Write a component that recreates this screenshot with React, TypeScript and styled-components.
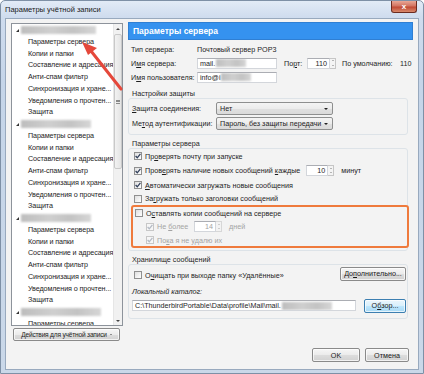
import styled, { createGlobalStyle } from "styled-components";

const GlobalStyle = createGlobalStyle`
  html, body { margin: 0; padding: 0; }
  body {
    width: 424px;
    height: 374px;
    overflow: hidden;
    background: #ffffff;
    font-family: "Liberation Sans", Arial, sans-serif;
    font-size: 7.2px;
    color: #1e1e1e;
  }
  * { box-sizing: border-box; }
`;

const Window = styled.div`
  position: relative;
  width: 424px;
  height: 374px;
  display: flex;
  flex-direction: column;
  background: linear-gradient(180deg, #e2ebf6 0px, #cfdcee 16px, #c5d5e9 80px, #cad8e9 100%);
  border: 1px solid #7e90a6;
  border-radius: 5px 5px 0 0;
  padding: 0 4px 3px 4px;
`;

const TitleBar = styled.div`
  height: 17px;
  display: flex;
  align-items: center;
  justify-content: space-between;
`;

const Title = styled.span`
  font-size: 7.5px;
  color: #1a1a1a;
`;

const CloseBtn = styled.div`
  align-self: flex-start;
  width: 26px;
  height: 12px;
  margin-right: 2px;
  border: 1px solid #6b2b20;
  border-top: none;
  border-radius: 0 0 3px 3px;
  background: linear-gradient(180deg, #e9a795 0%, #d27461 45%, #c14a35 55%, #d88a6c 100%);
  color: #ffffff;
  font-size: 8px;
  font-weight: bold;
  display: flex;
  align-items: center;
  justify-content: center;
`;

const Client = styled.div`
  flex: 1;
  display: flex;
  flex-direction: column;
  background: #f3f3f3;
  border: 1px solid #98a9be;
  padding: 3px 5px 6px 5px;
`;

const Main = styled.div`
  flex: 1;
  display: flex;
  gap: 5px;
`;

const LeftCol = styled.div`
  width: 112px;
  display: flex;
  flex-direction: column;
`;

const Tree = styled.div`
  margin-top: 1px;
  height: 303px;
  background: #ffffff;
  border: 1px solid #8d939b;
  display: flex;
  overflow: hidden;
`;

const TreeList = styled.div`
  flex: 1;
  overflow: hidden;
`;

const TreeRow = styled.div<{ $indent: number }>`
  height: 11.76px;
  line-height: 11.76px;
  padding-left: ${(p) => p.$indent}px;
  white-space: nowrap;
  overflow: hidden;
  letter-spacing: -0.1px;
  display: flex;
  align-items: center;
  gap: 2px;
`;

const Expander = styled.span`
  width: 0;
  height: 0;
  border-left: 3px solid transparent;
  border-bottom: 3px solid #333;
  margin-top: 2px;
`;

const Blur = styled.span<{ $w: number }>`
  width: ${(p) => p.$w}px;
  height: 8px;
  background: linear-gradient(90deg, #bdbdbd, #cfcfcf 40%, #c3c3c3 70%, #d6d6d6);
  filter: blur(1.2px);
`;

const ScrollBar = styled.div`
  width: 9px;
  background: #f1f1f1;
  border-left: 1px solid #e6e6e6;
  display: flex;
  flex-direction: column;
  align-items: center;
`;

const ScrollArrow = styled.span`
  height: 9px;
  display: flex;
  align-items: center;
  justify-content: center;
`;

const Thumb = styled.div`
  margin-top: 1px;
  width: 8px;
  height: 135px;
  border: 1px solid #c9c9c9;
  border-radius: 2px;
  background: linear-gradient(90deg, #f2f2f2, #e4e4e4);
  display: flex;
  align-items: center;
  justify-content: center;
`;

const Grip = styled.span`
  width: 4px;
  height: 4px;
  border-top: 1px solid #8a8a8a;
  border-bottom: 1px solid #8a8a8a;
  position: relative;
  &::after {
    content: "";
    position: absolute;
    left: 0;
    right: 0;
    top: 0.5px;
    border-top: 1px solid #8a8a8a;
  }
`;

const Track = styled.div`
  flex: 1;
`;

const Button = styled.div<{ $w: number; $focus?: boolean }>`
  width: ${(p) => p.$w}px;
  height: 14px;
  border: 1px solid ${(p) => (p.$focus ? "#3c7fb1" : "#8a8a8a")};
  border-radius: 2px;
  background: ${(p) =>
    p.$focus
      ? "linear-gradient(180deg, #eaf6fd 0%, #d9f0fc 50%, #bee6fd 51%, #a7d9f5 100%)"
      : "linear-gradient(180deg, #f6f6f6 0%, #ebebeb 50%, #dddddd 51%, #d1d1d1 100%)"};
  box-shadow: inset 0 0 0 1px rgba(255, 255, 255, 0.7);
  display: flex;
  align-items: center;
  justify-content: center;
  white-space: nowrap;
  color: #1a1a1a;
`;

const ActionButton = styled(Button)`
  margin: 2px 0 0 2px;
  height: 13px;
  gap: 3px;
  padding: 0;
  font-size: 6.6px;
  letter-spacing: -0.2px;
  overflow: hidden;
`;

const RightCol = styled.div`
  flex: 1;
  display: flex;
  flex-direction: column;
`;

const Header = styled.div`
  height: 18px;
  background: #3592ef;
  border: 1px solid #2f7fd3;
  color: #ffffff;
  font-weight: bold;
  font-size: 8.5px;
  display: flex;
  align-items: center;
  padding-left: 4px;
`;

const Spacer = styled.div<{ $h: number }>`
  height: ${(p) => p.$h}px;
`;

const FormRow = styled.div<{ $h: number; $mt?: number; $gap?: number }>`
  height: ${(p) => p.$h}px;
  margin-top: ${(p) => p.$mt ?? 0}px;
  gap: ${(p) => p.$gap ?? 0}px;
  display: flex;
  align-items: center;
  padding-left: 3px;
  white-space: nowrap;
`;

const Label = styled.span<{ $w?: number; $ml?: number; $dis?: boolean }>`
  ${(p) => (p.$w ? `width: ${p.$w}px; flex: none;` : "")}
  margin-left: ${(p) => p.$ml ?? 0}px;
  color: ${(p) => (p.$dis ? "#a3a3a3" : "#1e1e1e")};
  white-space: nowrap;
`;

const Field = styled.div<{ $w: number; $align?: string }>`
  width: ${(p) => p.$w}px;
  height: 11px;
  background: #ffffff;
  border: 1px solid #d3d6db;
  border-top-color: #abadb3;
  display: flex;
  align-items: center;
  justify-content: ${(p) => p.$align ?? "flex-start"};
  padding: 0 2px;
  overflow: hidden;
  white-space: nowrap;
  gap: 1px;
`;

const SpinWrap = styled.div<{ $ml: number }>`
  margin-left: ${(p) => p.$ml}px;
  display: flex;
  align-items: center;
`;

const SpinArrows = styled.div<{ $dis?: boolean }>`
  width: 6px;
  height: 11px;
  border: 1px solid #c6c6c6;
  border-left: none;
  background: #f4f4f4;
  display: flex;
  flex-direction: column;
  align-items: center;
  justify-content: space-around;
  opacity: ${(p) => (p.$dis ? 0.6 : 1)};
`;

const Tri = styled.span<{ $up?: boolean; $c?: string; $s?: number }>`
  flex: none;
  width: 0;
  height: 0;
  border-left: ${(p) => p.$s ?? 2}px solid transparent;
  border-right: ${(p) => p.$s ?? 2}px solid transparent;
  ${(p) =>
    p.$up
      ? `border-bottom: ${p.$s ?? 2}px solid ${p.$c ?? "#555"};`
      : `border-top: ${p.$s ?? 2}px solid ${p.$c ?? "#555"};`}
`;

const Select = styled.div`
  width: 117px;
  height: 13px;
  border: 1px solid #8e8f8f;
  border-radius: 2px;
  background: linear-gradient(180deg, #f4f4f4 0%, #ececec 50%, #e0e0e0 51%, #dadada 100%);
  display: flex;
  align-items: center;
  justify-content: space-between;
  padding: 0 4px 0 3px;
  white-space: nowrap;
`;

const GroupCaption = styled.div<{ $mt: number }>`
  height: 10px;
  margin-top: ${(p) => p.$mt}px;
  padding-left: 4px;
  display: flex;
  align-items: center;
`;

const GroupBox = styled.div<{ $pt: number; $pb: number }>`
  width: 280px;
  border: 1px solid #dde3e8;
  border-radius: 3px;
  padding: ${(p) => p.$pt}px 1px ${(p) => p.$pb}px 0;
`;

const CheckRow = styled.div<{ $h: number; $pl: number; $mt?: number }>`
  height: ${(p) => p.$h}px;
  margin-top: ${(p) => p.$mt ?? 0}px;
  display: flex;
  align-items: center;
  padding-left: ${(p) => p.$pl}px;
  white-space: nowrap;
`;

const SplitRow = styled(CheckRow)`
  justify-content: space-between;
`;

const CheckLabel = styled.span`
  display: flex;
  align-items: center;
  margin-top: 3px;
`;

const Text = styled.span<{ $dis?: boolean }>`
  white-space: nowrap;
  color: ${(p) => (p.$dis ? "#a3a3a3" : "#1e1e1e")};
`;

const CheckBox = styled.span<{ $dis?: boolean }>`
  flex: none;
  width: 8px;
  height: 8px;
  margin-right: 3px;
  border: 1px solid ${(p) => (p.$dis ? "#c7c7c7" : "#8f8f8f")};
  background: ${(p) => (p.$dis ? "#f6f6f6" : "linear-gradient(135deg, #dedede, #ffffff)")};
  display: flex;
  align-items: center;
  justify-content: center;
`;

const Highlight = styled.div`
  width: 278px;
  margin-left: 2px;
  border: 2px solid #ef7a3c;
  border-radius: 3px;
  padding-left: 1px;
`;

const Footer = styled.div`
  margin-top: auto;
  display: flex;
  justify-content: flex-end;
  gap: 5px;
  padding-right: 4px;
  padding-bottom: 1px;
`;

const U = styled.span`
  text-decoration: underline;
  text-underline-offset: 1px;
`;

const Italic = styled.span`
  font-style: italic;
`;

const ArrowLayer = styled.svg`
  position: absolute;
  left: 0;
  top: 0;
  pointer-events: none;
`;

const Check = ({ on, dis }: { on?: boolean; dis?: boolean }) => (
  <CheckBox $dis={dis}>
    {on && (
      <svg width="6" height="6" viewBox="0 0 6 6">
        <path d="M0.6 3 L2.3 4.8 L5.4 0.9" fill="none" stroke={dis ? "#b3bac4" : "#33415c"} strokeWidth="1.3" />
      </svg>
    )}
  </CheckBox>
);

const Spin = ({ value, ml, w, dis }: { value: string; ml: number; w: number; dis?: boolean }) => (
  <SpinWrap $ml={ml}>
    <Field $w={w} $align="flex-end">
      <Label $dis={dis}>{value}</Label>
    </Field>
    <SpinArrows $dis={dis}>
      <Tri $up $s={1.5} $c="#777" />
      <Tri $s={1.5} $c="#777" />
    </SpinArrows>
  </SpinWrap>
);

const sections = [
  "Параметры сервера",
  "Копии и папки",
  "Составление и адресация",
  "Анти-спам фильтр",
  "Синхронизация и хране...",
  "Уведомления о прочтен...",
  "Защита",
];

// blurred account name width, and how many of its rows fit in the list
const accounts = [
  { w: 75, rows: 7 },
  { w: 70, rows: 7 },
  { w: 70, rows: 7 },
  { w: 80, rows: 1 },
];

export default function App() {
  return (
    <>
      <GlobalStyle />
      <Window>
        <TitleBar>
          <Title>Параметры учётной записи</Title>
          <CloseBtn>x</CloseBtn>
        </TitleBar>
        <Client>
          <Main>
            <LeftCol>
              <Tree>
                <TreeList>
                  {accounts.map((a, i) => (
                    <div key={i}>
                      <TreeRow $indent={4}>
                        <Expander />
                        <Blur $w={a.w} />
                      </TreeRow>
                      {sections.slice(0, a.rows).map((s) => (
                        <TreeRow key={s} $indent={16}>
                          {s}
                        </TreeRow>
                      ))}
                    </div>
                  ))}
                </TreeList>
                <ScrollBar>
                  <ScrollArrow>
                    <Tri $up $s={2} $c="#444" />
                  </ScrollArrow>
                  <Thumb>
                    <Grip />
                  </Thumb>
                  <Track />
                  <ScrollArrow>
                    <Tri $s={2} $c="#444" />
                  </ScrollArrow>
                </ScrollBar>
              </Tree>
              <ActionButton $w={107}>
                <Text>Действия для учётной записи</Text>
                <Tri $s={1.5} $c="#333" />
              </ActionButton>
            </LeftCol>

            <RightCol>
              <Header>Параметры сервера</Header>
              <Spacer $h={2} />
              <FormRow $h={14}>
                <Label $w={66}>Тип сервера:</Label>
                <Label>Почтовый сервер POP3</Label>
              </FormRow>
              <FormRow $h={14}>
                <Label $w={66}>
                  И<U>м</U>я сервера:
                </Label>
                <Field $w={80}>
                  mail.
                  <Blur $w={30} />
                </Field>
                <Label $w={23} $ml={7}>
                  По<U>р</U>т:
                </Label>
                <Spin value="110" ml={0} w={23} />
                <Label $ml={6} $w={58}>
                  По умолчанию:
                </Label>
                <Label>110</Label>
              </FormRow>
              <FormRow $h={14}>
                <Label $w={66}>
                  И<U>м</U>я пользователя:
                </Label>
                <Field $w={80}>
                  info@i
                  <Blur $w={30} />
                </Field>
              </FormRow>

              <GroupCaption $mt={4}>Настройки защиты</GroupCaption>
              <GroupBox $pt={2} $pb={3}>
                <FormRow $h={15}>
                  <Label $w={84}>
                    <U>З</U>ащита соединения:
                  </Label>
                  <Select>
                    Нет
                    <Tri $s={2} $c="#222" />
                  </Select>
                </FormRow>
                <FormRow $h={15}>
                  <Label $w={84}>
                    Ме<U>т</U>од аутентификации:
                  </Label>
                  <Select>
                    Пароль, без защиты передачи
                    <Tri $s={2} $c="#222" />
                  </Select>
                </FormRow>
              </GroupBox>

              <GroupCaption $mt={3}>Параметры сервера</GroupCaption>
              <GroupBox $pt={0} $pb={2}>
                <CheckRow $h={14} $pl={5}>
                  <Check on />
                  <Text>
                    Пр<U>о</U>верять почту при запуске
                  </Text>
                </CheckRow>
                <CheckRow $h={15} $pl={5}>
                  <Check on />
                  <Text>
                    Пров<U>е</U>рять наличие новых сообщений <U>к</U>аждые
                  </Text>
                  <Spin value="10" ml={6} w={22} />
                  <Label $ml={7}>минут</Label>
                </CheckRow>
                <CheckRow $h={14} $pl={5}>
                  <Check on />
                  <Text>
                    <U>А</U>втоматически загружать новые сообщения
                  </Text>
                </CheckRow>
                <CheckRow $h={13} $pl={5}>
                  <Check />
                  <Text>
                    За<U>г</U>ружать только заголовки сообщений
                  </Text>
                </CheckRow>
                <Highlight>
                  <CheckRow $h={12} $pl={1}>
                    <Check />
                    <Text>
                      О<U>с</U>тавлять копии сообщений на сервере
                    </Text>
                  </CheckRow>
                  <CheckRow $h={15} $pl={12}>
                    <Check on dis />
                    <Label $dis $w={37}>
                      Не <U>б</U>олее
                    </Label>
                    <Spin value="14" ml={0} w={22} dis />
                    <Label $dis $ml={7}>
                      дней
                    </Label>
                  </CheckRow>
                  <CheckRow $h={12} $pl={12}>
                    <Check on dis />
                    <Text $dis>
                      По<U>к</U>а я не удалю их
                    </Text>
                  </CheckRow>
                </Highlight>
              </GroupBox>

              <GroupCaption $mt={3}>Хранилище сообщений</GroupCaption>
              <GroupBox $pt={1} $pb={5}>
                <SplitRow $h={15} $pl={5}>
                  <CheckLabel>
                    <Check />
                    <Text>
                      О<U>ч</U>ищать при выходе папку «Удалённые»
                    </Text>
                  </CheckLabel>
                  <Button $w={66}>
                    До<U>п</U>олнительно...
                  </Button>
                </SplitRow>
                <FormRow $h={14} $mt={3}>
                  <Italic>Локальный каталог:</Italic>
                </FormRow>
                <FormRow $h={15} $gap={8}>
                  <Field $w={224}>
                    C:\ThunderbirdPortable\Data\profile\Mail\mail.
                    <Blur $w={50} />
                  </Field>
                  <Button $w={42} $focus>
                    О<U>б</U>зор...
                  </Button>
                </FormRow>
              </GroupBox>

              <Footer>
                <Button $w={48}>OK</Button>
                <Button $w={44}>Отмена</Button>
              </Footer>
            </RightCol>
          </Main>
        </Client>
        <ArrowLayer width="424" height="374" viewBox="0 0 424 374">
          <line x1="120" y1="88" x2="90" y2="50" stroke="#e5483b" strokeWidth="3" strokeLinecap="round" />
          <path d="M81 41 L96 47 L87 54 Z" fill="#e5483b" />
        </ArrowLayer>
      </Window>
    </>
  );
}
